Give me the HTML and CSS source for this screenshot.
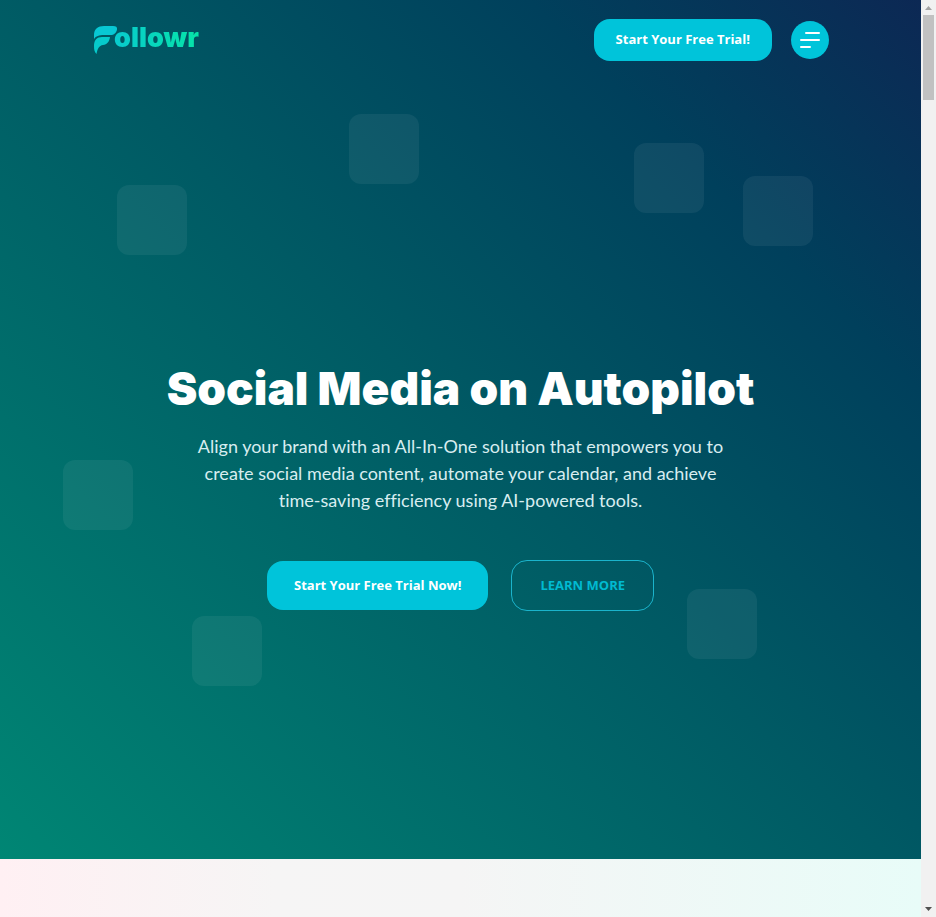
FILE: index.html
```html
<!DOCTYPE html>
<html lang="en">
<head>
<meta charset="utf-8">
<meta name="viewport" content="width=device-width, initial-scale=1">
<title>Followr</title>
<link rel="stylesheet" href="styles.css">
</head>
<body>
<div class="page">
  <div class="hero">
    <div class="tiles" aria-hidden="true">
      <span class="tile tile-a"></span>
      <span class="tile tile-b"></span>
      <span class="tile tile-c"></span>
      <span class="tile tile-d"></span>
      <span class="tile tile-e"></span>
      <span class="tile tile-f"></span>
      <span class="tile tile-g"></span>
    </div>
    <header class="header">
      <a class="logo" href="#" aria-label="Followr">
        <svg class="logo-mark" viewBox="0 0 24 30" width="24" height="30" aria-hidden="true">
          <path fill="#08c8d4" d="M0 14V10C0 4 4 1 10 1H19C22 1 23.500 2 23 4.500C22.400 8 20 10 16.500 10H10C5 10 2 11 0 14Z"/>
          <path fill="#06cbcc" d="M0 21C0 15 3 12 8 12H16C15.500 16.500 13 19.500 9 20C5 20.500 3.500 24 2.500 29C0.500 27 0 25 0 21Z"/>
        </svg>
        <span class="logo-text">ollowr</span>
      </a>
      <div class="header-actions">
        <a class="button button-small" href="#">Start Your Free Trial!</a>
        <button class="menu" type="button" aria-label="Open menu">
          <svg viewBox="0 0 20 16" width="20" height="16" aria-hidden="true">
            <path d="M6 1H19M1 8H19M1 15H10" fill="none" stroke="#fff" stroke-width="2" stroke-linecap="round"/>
          </svg>
        </button>
      </div>
    </header>
    <main class="content">
      <h1>Social Media on Autopilot</h1>
      <p>Align your brand with an All-In-One solution that empowers you to<br>
      create social media content, automate your calendar, and achieve<br>
      time-saving efficiency using AI-powered tools.</p>
      <div class="actions">
        <a class="button" href="#">Start Your Free Trial Now!</a>
        <a class="button button-outline" href="#">LEARN MORE</a>
      </div>
    </main>
  </div>
  <section class="next"></section>
</div>
<div class="scrollbar" aria-hidden="true">
  <svg viewBox="0 0 15 15" width="15" height="15"><path d="M4 10L7.500 6L11 10Z" fill="#a3a3a3"/></svg>
  <span class="thumb"></span>
  <svg class="scroll-down" viewBox="0 0 15 15" width="15" height="15"><path d="M4 5H11L7.500 9Z" fill="#505050"/></svg>
</div>
</body>
</html>
```
FILE: styles.css
```css
* {
  box-sizing: border-box;
}

body {
  display: grid;
  grid-template-columns: 1fr 15px;
  height: 100vh;
  margin: 0;
  overflow: hidden;
  font-family: Lato, "Open Sans", sans-serif;
  font-variant-ligatures: none;
}

.page {
  display: flex;
  flex-direction: column;
}

.hero {
  position: relative;
  flex: 1;
  background: linear-gradient(45deg, #008674 0%, #005a64 50%, #00405c 78%, #0c2854 100%);
}

.tile {
  position: absolute;
  width: 70px;
  height: 70px;
  border-radius: 12px;
  background: rgba(255, 255, 255, 0.06);
}

.tile-a { left: 117px; top: 185px; }
.tile-b { left: 349px; top: 114px; }
.tile-c { left: 634px; top: 143px; }
.tile-d { left: 743px; top: 176px; }
.tile-e { left: 63px; top: 460px; }
.tile-f { left: 192px; top: 616px; }
.tile-g { left: 687px; top: 589px; }

.header {
  position: relative;
  display: flex;
  align-items: center;
  justify-content: space-between;
  width: 80%;
  height: 80px;
  margin: 0 auto;
}

.logo {
  display: flex;
  align-items: center;
  padding-left: 2px;
  text-decoration: none;
}

.logo-text {
  margin-left: -4px;
  padding-bottom: 4px;
  font-family: Inter, sans-serif;
  font-size: 27px;
  font-weight: 900;
  line-height: 30px;
  color: transparent;
  background: linear-gradient(90deg, #08cbce, #06e3a8);
  background-clip: text;
  -webkit-background-clip: text;
}

.header-actions {
  display: flex;
  align-items: center;
  gap: 19px;
}

.button {
  padding: 15px 27px;
  border-radius: 16px;
  background: #00c4da;
  color: #fff;
  font-family: "Open Sans", sans-serif;
  font-size: 13px;
  font-weight: 700;
  line-height: 19px;
  text-decoration: none;
}

.button-small {
  padding: 11px 22px 12px;
}

.button-outline {
  padding: 15px 28px;
  border: 1px solid #1bb4cc;
  background: transparent;
  color: #00bad1;
}

.menu {
  display: grid;
  place-items: center;
  width: 38px;
  height: 38px;
  padding: 0;
  border: 0;
  border-radius: 50%;
  background: #00c4da;
}

.content {
  position: relative;
  padding-top: 278px;
  text-align: center;
}

h1 {
  margin: 0;
  color: #fff;
  font-family: Inter, sans-serif;
  font-size: 46px;
  font-weight: 900;
  line-height: 60px;
}

p {
  margin: 15px 0 0;
  color: #d8edf0;
  font-size: 18px;
  line-height: 27px;
}

.actions {
  display: flex;
  align-items: center;
  justify-content: center;
  gap: 23px;
  margin-top: 46px;
}

.next {
  height: 58px;
  background: linear-gradient(90deg, #fff0f3 0%, #f6f5f5 30%, #f5f5f5 50%, #e8fcf8 100%);
}

.scrollbar {
  display: flex;
  flex-direction: column;
  background: #f1f1f1;
}

.thumb {
  width: 11px;
  height: 85px;
  margin: 0 2px;
  background: #c1c1c1;
}

.scroll-down {
  margin-top: auto;
}
```
